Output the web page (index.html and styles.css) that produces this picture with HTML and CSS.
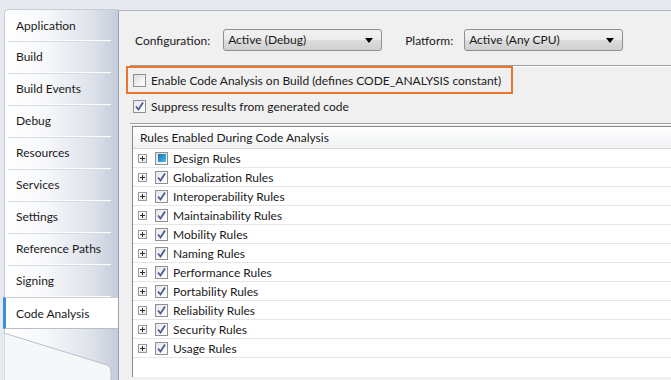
FILE: index.html
```html
<!DOCTYPE html>
<html lang="en">
<head>
    <meta charset="UTF-8">
    <title>Code Analysis</title>
    <link rel="stylesheet" href="styles.css">
</head>
<body>
    <div class="frame">
        <!-- Left side tabs -->
        <nav class="nav">
            <div class="tab">Application</div>
            <div class="tab">Build</div>
            <div class="tab">Build Events</div>
            <div class="tab">Debug</div>
            <div class="tab">Resources</div>
            <div class="tab">Services</div>
            <div class="tab">Settings</div>
            <div class="tab">Reference Paths</div>
            <div class="tab">Signing</div>
            <div class="tab selected">Code Analysis</div>
            <div class="nav-foot">
                <svg width="114" height="60" viewBox="0 0 114 60">
                    <path d="M0 4 L103 36 Q107 37.5 107 42 L107 60 L0 60 Z" fill="#f6f7f9" stroke="#b9c0cc" stroke-width="1"/>
                </svg>
            </div>
        </nav>

        <!-- Property page -->
        <main class="page">
            <div class="config-row">
                <label>Configuration:</label>
                <div class="combo combo-config">Active (Debug)<span class="arrow"></span></div>
                <label class="platform-label">Platform:</label>
                <div class="combo">Active (Any CPU)<span class="arrow"></span></div>
            </div>

            <div class="rule-line"></div>

            <div class="highlight">
                <span class="check"></span>
                <span>Enable Code Analysis on Build (defines CODE_ANALYSIS constant)</span>
            </div>

            <div class="option">
                <span class="check checked">
                    <svg width="11" height="11" viewBox="0 0 11 11"><path d="M2 5.5 L4.5 8.5 L9 1.5" fill="none" stroke="#4b5d8f" stroke-width="1.8"/></svg>
                </span>
                <span>Suppress results from generated code</span>
            </div>

            <div class="rule-line lower"></div>

            <div class="rules">
                <div class="rules-head">Rules Enabled During Code Analysis</div>
                <div class="rules-body" id="rules"></div>
            </div>
        </main>
    </div>

    <script>
        // Rule groups shown in the tree
        const RULES = [
            "Design Rules", "Globalization Rules", "Interoperability Rules",
            "Maintainability Rules", "Mobility Rules", "Naming Rules",
            "Performance Rules", "Portability Rules", "Reliability Rules",
            "Security Rules", "Usage Rules"
        ];

        const TICK = '<svg width="11" height="11" viewBox="0 0 11 11"><path d="M2 5.5 L4.5 8.5 L9 1.5" fill="none" stroke="#4b5d8f" stroke-width="1.8"/></svg>';
        const list = document.getElementById("rules");

        RULES.forEach((name, i) => {
            const row = document.createElement("div");
            row.className = "rule-row";
            const box = i === 0
                ? '<span class="check partial"><span class="fill"></span></span>'
                : '<span class="check checked">' + TICK + '</span>';
            row.innerHTML = '<span class="expander"></span>' + box + '<span class="rule-name">' + name + '</span>';
            list.appendChild(row);
        });
    </script>
</body>
</html>
```

FILE: styles.css
```css
/* Base */
html, body {
    margin: 0;
    padding: 0;
}

body {
    width: 671px;
    height: 380px;
    overflow: hidden;
    background: #e6e9ee;
    font-family: 'Lato', 'Noto Sans', sans-serif;
    font-size: 12px;
    color: #1a1a1a;
    white-space: nowrap;
}

.frame {
    display: flex;
    height: 380px;
}

/* Side tabs */
.nav {
    width: 114px;
    margin: 9px 0 0 4px;
    display: flex;
    flex-direction: column;
    border-left: 1px solid #c6cbd4;
    border-top: 1px solid #c6cbd4;
    border-radius: 5px 0 0 0;
    background: linear-gradient(to right, #ffffff 0%, #f7f8fa 35%, #dfe3eb 75%, #c5ccda 100%);
    box-sizing: border-box;
}

.tab {
    height: 32px;
    flex: none;
    display: flex;
    align-items: center;
    margin: 0 7px 0 3px;
    padding-left: 8px;
    box-sizing: border-box;
    border-bottom: 1px solid #fbfcfd;
    box-shadow: 0 1px 0 #d6dbe4;
}

.tab:first-child {
    height: 31px;
}

.tab.selected {
    margin: 0;
    margin-left: -2px;
    padding-left: 10px;
    background: #ffffff;
    border-top: 1px solid #c9ced6;
    border-bottom: 1px solid #b9bfca;
    border-left: 3px solid #3b8fe3;
    box-shadow: none;
    width: 116px;
}

.nav-foot {
    flex: 1;
    position: relative;
}

.nav-foot svg {
    position: absolute;
    left: -1px;
    top: 0;
}

/* Property page */
.page {
    flex: 1;
    margin-top: 10px;
    background: #f0f0f0;
    border-left: 1px solid #9aa3b3;
    border-top: 1px solid #b0b7c3;
    padding-top: 18px;
}

.config-row {
    display: flex;
    align-items: center;
    padding-left: 16px;
    height: 22px;
}

.config-row label {
    margin-right: 13px;
}

.config-row .platform-label {
    margin-left: 23px;
    margin-right: 11px;
}

.combo {
    position: relative;
    width: 159px;
    height: 22px;
    box-sizing: border-box;
    border: 1px solid #8e8f8f;
    border-radius: 3px;
    background: linear-gradient(to bottom, #f2f2f2 0%, #ebebeb 50%, #dddddd 51%, #cfcfcf 100%);
    padding-left: 4px;
    line-height: 20px;
}

.combo .arrow {
    position: absolute;
    right: 8px;
    top: 8px;
    border-left: 4px solid transparent;
    border-right: 4px solid transparent;
    border-top: 5px solid #000;
}

.rule-line {
    margin: 14px 0 0 11px;
    height: 1px;
    background: #a0a0a0;
    border-bottom: 1px solid #ffffff;
}

.rule-line.lower {
    margin-top: 10px;
}

.highlight {
    display: flex;
    align-items: center;
    width: 387px;
    height: 28px;
    box-sizing: border-box;
    margin: -1px 0 0 7px;
    border: 2px solid #e6782c;
    padding-left: 5px;
}

.option {
    display: flex;
    align-items: center;
    height: 13px;
    margin: 6px 0 0 14px;
}

.check {
    width: 13px;
    height: 13px;
    box-sizing: border-box;
    border: 1px solid #8f8f8f;
    background: linear-gradient(135deg, #dcdcdc 0%, #f6f6f6 70%, #ffffff 100%);
    display: inline-flex;
    align-items: center;
    justify-content: center;
    margin-right: 5px;
    flex: none;
}

.check.checked {
    background: linear-gradient(135deg, #e4e6ea 0%, #f8f9fa 70%, #ffffff 100%);
}

.check.partial .fill {
    width: 8px;
    height: 8px;
    background: linear-gradient(135deg, #1d6fb0 0%, #2f9ed8 60%, #56c0ea 100%);
}

/* Rules tree */
.rules {
    margin: 1px 0 0 13px;
    height: 250px;
    border-left: 1px solid #828790;
    border-top: 1px solid #828790;
    background: #ffffff;
}

.rules-head {
    height: 22px;
    box-sizing: border-box;
    padding-left: 7px;
    line-height: 21px;
    background: linear-gradient(to bottom, #ffffff 0%, #f7f8f9 50%, #f0f1f2 100%);
    border-bottom: 1px solid #d5d5d5;
}

.rule-row {
    display: flex;
    align-items: center;
    height: 19px;
    box-sizing: border-box;
    border-bottom: 1px solid #e6e6e6;
    padding-left: 5px;
}

.expander {
    width: 9px;
    height: 9px;
    box-sizing: border-box;
    border: 1px solid #9a9a9a;
    margin-right: 8px;
    position: relative;
    background: linear-gradient(135deg, #ffffff, #e8e8e8);
}

.expander::before,
.expander::after {
    content: '';
    position: absolute;
    background: #2a2a2a;
}

.expander::before {
    left: 1px;
    top: 3px;
    width: 5px;
    height: 1px;
}

.expander::after {
    left: 3px;
    top: 1px;
    width: 1px;
    height: 5px;
}
```
